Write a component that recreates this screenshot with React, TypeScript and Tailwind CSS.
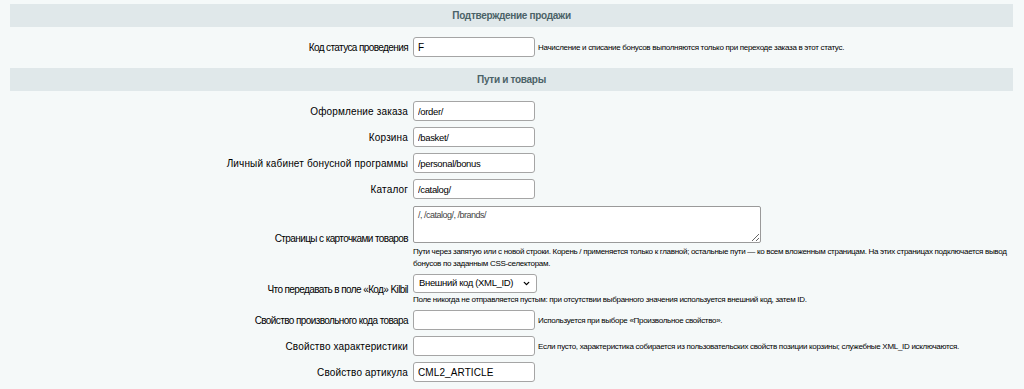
import { ChevronDown } from "lucide-react";
import type { ReactNode } from "react";

const inputCls =
  "h-[20px] w-[122px] rounded-[3px] border border-[#a5a5a5] bg-white px-[4px] text-black outline-none";
const wide = "text-[10px] tracking-[0.1px]";
const narrow = "text-[9.5px] tracking-[-0.35px]";

function Heading({ title }: { title: string }) {
  return (
    <div className="flex h-[23px] items-center justify-center bg-[#e0e8ea] text-[10px] font-bold tracking-[-0.3px] text-[#4b6267]">
      {title}
    </div>
  );
}

interface RowProps {
  label: string;
  children: ReactNode;
  side?: string;
  below?: ReactNode;
  className?: string;
  condensed?: boolean;
}

function Row({ label, children, side, below, className = "", condensed }: RowProps) {
  return (
    <div className={`grid grid-cols-[398px_1fr] items-center gap-x-[5px] ${className}`}>
      <div className={`text-right leading-[13px] ${condensed ? "text-[10px] tracking-[-0.6px]" : "text-[10px] tracking-[0.15px]"}`}>
        {label}
      </div>
      <div className="flex flex-col items-start">
        <div className="flex items-center gap-[3px]">
          {children}
          {side && <span className="text-[8px] leading-[11px] tracking-[-0.3px]">{side}</span>}
        </div>
        {below}
      </div>
    </div>
  );
}

export default function App() {
  return (
    <div className="min-h-screen bg-[#f5f9f9] pl-[10px] pr-[11px] pt-[4px] font-['Liberation_Sans',Arial,sans-serif] text-black">
      <Heading title="Подтверждение продажи" />
      <Row label="Код статуса проведения" condensed className="pt-[10px] pb-[11px]"
        side="Начисление и списание бонусов выполняются только при переходе заказа в этот статус.">
        <input className={`${inputCls} ${wide}`} defaultValue="F" />
      </Row>

      <Heading title="Пути и товары" />
      <div className="pt-[7px]">
        <Row label="Оформление заказа" className="h-[26px]">
          <input className={`${inputCls} ${narrow}`} defaultValue="/order/" />
        </Row>
        <Row label="Корзина" className="h-[26px]">
          <input className={`${inputCls} ${narrow}`} defaultValue="/basket/" />
        </Row>
        <Row label="Личный кабинет бонусной программы" className="h-[26px]">
          <input className={`${inputCls} ${narrow}`} defaultValue="/personal/bonus" />
        </Row>
        <Row label="Каталог" className="h-[26px]">
          <input className={`${inputCls} ${narrow}`} defaultValue="/catalog/" />
        </Row>

        <Row
          label="Страницы с карточками товаров"
          condensed
          className="pt-[4px] pb-[2px]"
          below={
            <p className="mt-[3px] max-w-[600px] text-[8px] leading-[12px] tracking-[-0.3px]">
              Пути через запятую или с новой строки. Корень / применяется только к главной; остальные пути — ко всем вложенным страницам. На этих страницах подключается вывод бонусов по заданным CSS-селекторам.
            </p>
          }
        >
          <textarea
            className="block h-[37px] w-[348px] rounded-[2px] border border-[#9a9a9a] bg-white px-[4px] py-[2px] text-[9px] leading-[12px] tracking-[-0.5px] text-[#444] outline-none"
            defaultValue="/, /catalog/, /brands/"
          />
        </Row>

        <Row
          label="Что передавать в поле «Код» Kilbil"
          condensed
          className="pt-[2px] pb-[2px]"
          below={
            <p className="mt-[1px] text-[8px] leading-[11px] tracking-[-0.3px]">
              Поле никогда не отправляется пустым: при отсутствии выбранного значения используется внешний код, затем ID.
            </p>
          }
        >
          <div className="relative">
            <select
              className="block h-[19px] w-[124px] appearance-none rounded-[3px] border border-[#a5a5a5] bg-white pl-[5px] text-[9.5px] tracking-[-0.35px] text-black outline-none"
              defaultValue="xml"
            >
              <option value="xml">Внешний код (XML_ID)</option>
              <option value="id">ID</option>
              <option value="prop">Произвольное свойство</option>
            </select>
            <ChevronDown
              size={9}
              strokeWidth={3.5}
              className="pointer-events-none absolute right-[6px] top-[5px] text-black"
            />
          </div>
        </Row>

        <Row label="Свойство произвольного кода товара" condensed className="h-[26px]"
          side="Используется при выборе «Произвольное свойство».">
          <input className={`${inputCls} ${wide}`} defaultValue="" />
        </Row>
        <Row label="Свойство характеристики" className="h-[26px]"
          side="Если пусто, характеристика собирается из пользовательских свойств позиции корзины; служебные XML_ID исключаются.">
          <input className={`${inputCls} ${wide}`} defaultValue="" />
        </Row>
        <Row label="Свойство артикула" className="h-[26px]">
          <input className={`${inputCls} ${wide}`} defaultValue="CML2_ARTICLE" />
        </Row>
      </div>
    </div>
  );
}
